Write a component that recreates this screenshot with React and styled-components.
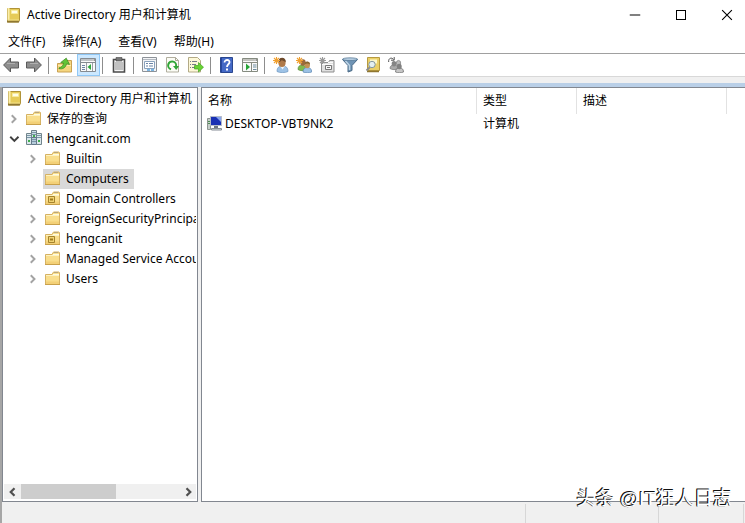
import React from 'react';
import styled, { createGlobalStyle } from 'styled-components';

const GlobalStyle = createGlobalStyle`
  * {
    box-sizing: border-box;
  }
  html, body, #root {
    height: 100%;
    margin: 0;
  }
  body, button {
    font-family: "Noto Sans", "Noto Sans CJK SC", sans-serif;
    font-size: 12px;
    color: #000;
  }
  button {
    background: none;
    border: none;
    padding: 0;
  }
  svg {
    display: block;
    flex: none;
  }
`;

function Icon({ size = 16, children }) {
  return (
    <svg width={size} height={size} viewBox="0 0 16 16" fill="none" aria-hidden="true">
      {children}
    </svg>
  );
}

const BookIcon = () => (
  <Icon>
    <path d="M1.500 1.500h12v12l-1 1.500h-11z" fill="#e6cb58" stroke="#b09338" />
    <path d="M2.500 1v13" stroke="#fbeeaa" strokeWidth="2" />
    <path d="M5.500 3.500h6v3h-6z" fill="#fffde6" stroke="#f7eba0" />
    <path d="M1 14.500h12" stroke="#8f7730" strokeWidth="2" />
    <path d="M2 13h11" stroke="#f3e08a" />
  </Icon>
);

const FolderIcon = ({ unit }) => (
  <Icon>
    <path d="M.5 4.500h6.500l1.500-2.500h5.500l.5 1v11.500H.5z" fill="#f9de8c" stroke="#d6b263" />
    <path d="M8 4.500h6" stroke="#fffbe0" />
    <path d="M9 2.500h4" stroke="#b9a67c" />
    <path d="M1 5.500h13" stroke="#fdf2c2" />
    <path d="M1 11.500h13v2.500H1z" fill="#f3d077" />
    <path d="M0 14.500h15" stroke="#c9a14b" />
    {unit && (
      <>
        <path d="M3.500 6.500h6v6h-6z" fill="#f0d273" stroke="#a5832c" />
        <path d="M5 8.500h3v2H5z" fill="#a07b1c" />
      </>
    )}
  </Icon>
);

const DomainIcon = () => (
  <Icon>
    <path d="M5.500.5h5v10h-5z" fill="#cfe0e8" stroke="#6d7f88" />
    <path d="M.5 3.500h5v11h-5zM10.500 3.500h5v11h-5z" fill="#dce8ec" stroke="#71848c" />
    <path d="M6 2.500h4M6 4.500h4M1 5.500h4M1 7.500h4M11 5.500h4M11 7.500h4" stroke="#7a96a8" />
    <path d="M5.500 7.500h5v7h-5z" fill="#b7cddb" stroke="#65798a" />
    <path d="M2 10h2v2H2zM12 10h2v2h-2zM7 5h2v2H7z" fill="#3fae4c" />
    <path d="M6 9.500h4M6 11.500h4" stroke="#7a96a8" />
  </Icon>
);

const ComputerIcon = () => (
  <Icon>
    <path d="M.5 3.500h3v11h-3z" fill="#c5cdc9" stroke="#8d9591" />
    <path d="M1 6.500h2M1 8.500h2" stroke="#4c8d52" />
    <path d="M3.500 1.500h11v9h-11z" fill="#1a30b4" stroke="#b4bbc8" />
    <path d="M9 2h5v5z" fill="#86a4ee" />
    <path d="M7 11h4v2H7z" fill="#6e7682" />
    <path d="M4.500 13.500h10v1.500h-10z" fill="#e4e7ea" stroke="#858c95" />
  </Icon>
);

const ArrowIcon = ({ flip }) => (
  <Icon>
    <path
      d="M.6 8L7.500 1v4h8v6h-8v4z"
      transform={flip ? 'rotate(180 8 8)' : undefined}
      fill="#8e8e8e"
      stroke="#5a5a5a"
    />
    <path d="M4 6.500h8" stroke="#b0b0b0" />
  </Icon>
);

const UpFolderIcon = () => (
  <Icon>
    <path d="M.5 6.500h7l1.500-3h5.500v11.500H.5z" fill="#f5d67f" stroke="#c9a152" />
    <path d="M1 8.500h13" stroke="#fbebae" />
    <path d="M3 12c2.500-1 3.500-3 3.500-5.500H3.500L8 1l4.500 5.500H9.500c0 4-2.500 6.300-6.500 6.300z" transform="rotate(12 8 7)" fill="#62c436" stroke="#3d8b22" strokeWidth=".7" />
  </Icon>
);

const TreePaneIcon = () => (
  <Icon>
    <path d="M.5 1.500h15v13H.5z" fill="#fafafa" stroke="#858b91" />
    <path d="M1 3h11M1 5.500h14" stroke="#858b91" />
    <path d="M12.500 3h1M14 3h1" stroke="#333" />
    <path d="M6.500 6v8M12.500 6v8" stroke="#9ba0a5" />
    <path d="M2 8.500h3M2 10.500h3M2 12.500h3" stroke="#6d83a4" />
    <path d="M11 7v6L7.500 10z" fill="#2fa83c" />
  </Icon>
);

const ActionPaneIcon = () => (
  <Icon>
    <path d="M.5 1.500h15v13H.5z" fill="#fafafa" stroke="#858b80" />
    <path d="M1 3h11M1 5.500h14" stroke="#8a8d82" />
    <path d="M12.500 3h1M14 3h1" stroke="#333" />
    <path d="M9.500 6v8" stroke="#858b80" />
    <path d="M11 8h3.500M11 10h3.500M11 12.500h3.500" stroke="#6b8b9c" />
    <path d="M4 6.500v7L8 10z" fill="#27a536" />
  </Icon>
);

const ClipboardIcon = () => (
  <Icon>
    <path d="M2.500 2.500h11V15h-11z" fill="#f4f4f4" stroke="#4b4b4b" strokeWidth="1.600" />
    <path d="M5 .5h6v3.500H5z" fill="#777" stroke="#444" strokeWidth=".6" />
    <path d="M4 6h8M4 8h8M4 10h8M4 12h8" stroke="#8f8f8f" />
  </Icon>
);

const PropertiesIcon = () => (
  <Icon>
    <path d="M.5.5h14v14H.5z" fill="#f3f4f6" stroke="#8d9298" />
    <path d="M1 2.500h13" stroke="#b4bac1" />
    <path d="M2.500 4.500h10v7h-10z" fill="#fff" stroke="#8aa2bd" />
    <path d="M4 6.500h2M7 6.500h4M4 9h2M7 9h4" stroke="#6b84a6" />
    <path d="M5 13h3M9 13h3" stroke="#56a0dc" strokeWidth="1.500" />
  </Icon>
);

const RefreshIcon = () => (
  <Icon>
    <path d="M1.500.5h9l3 3v11.500h-12z" fill="#fcfcf6" stroke="#b1ae9e" />
    <path d="M10.500.5v3h3" stroke="#aaa796" />
    <path d="M6 12.300A4 4 0 1 1 11 9.500" stroke="#31a637" strokeWidth="2" />
    <path d="M8 9h6l-2.800 4z" fill="#31a637" />
  </Icon>
);

const ExportIcon = () => (
  <Icon>
    <path d="M.5.5h9l3 3v11.500H.5z" fill="#fdf8d8" stroke="#b3aa86" />
    <path d="M2 4.500h1M4 4.500h5M2 7.500h1M4 7.500h4M2 10.500h1M4 10.500h4" stroke="#777c88" />
    <path d="M6.500 8.500h4V5.500l5 4.700-5 4.800v-3h-4z" fill="#69d334" stroke="#43a41f" strokeWidth=".7" />
  </Icon>
);

const HelpIcon = () => (
  <Icon>
    <path d="M1.500.5h12v15h-12z" fill="#4469c6" stroke="#2a478f" />
    <path d="M2.500 1v14" stroke="#2546a0" />
    <path d="M5.500 5.500c0-3.500 5.500-3.200 5 0C10.200 7.300 8 7.500 8 10" stroke="#fff" strokeWidth="1.800" />
    <path d="M7 11.500h2v2H7z" fill="#fff" />
  </Icon>
);

const Spark = ({ color = '#f0a030' }) => (
  <>
    <path d="M3.500 0v7M0 3.500h7M1 1l5 5M6 1L1 6" stroke={color} strokeWidth="1.100" />
    <circle cx="3.500" cy="3.500" r="1.600" fill={color} />
  </>
);

const UserIcon = () => (
  <Icon>
    <path d="M4 14.500c0-4 2-5.500 5.500-5.500s5.500 1.500 5.500 5.500c-2.500 1.500-8.500 1.500-11 0z" fill="#9dc2e6" stroke="#6d97c0" strokeWidth=".7" />
    <path d="M7 9l2.500 3.500L12 9z" fill="#eef5fb" />
    <ellipse cx="9" cy="5.500" rx="3.600" ry="4.500" fill="#b07a4a" />
    <path d="M5.800 4.500C5.500-.5 13-.5 12.800 5 11 4.500 9.500 3 8.500 3.300 8 4.500 7 5 5.800 4.500z" fill="#6d4a2c" />
    <Spark />
  </Icon>
);

const GroupIcon = () => (
  <Icon>
    <path d="M2 12.500c0-3 1.500-4.500 4-4.500s4 1.500 4 4.500c-2 1.500-6 1.500-8 0z" fill="#7fbb4e" stroke="#56893a" strokeWidth=".7" />
    <ellipse cx="7" cy="5.500" rx="2.700" ry="3.300" fill="#9c6a3c" />
    <path d="M7 15c0-3 1.500-4.500 4.300-4.500S15.700 12 15.700 15c-2 1-6.700 1-8.700 0z" fill="#9bc1e4" stroke="#5b87b3" strokeWidth=".7" />
    <ellipse cx="11.300" cy="8" rx="2.700" ry="3.300" fill="#c49255" />
    <path d="M8.500 7.500c-.3-4.300 5.800-4 5.500 0-1.500-1-3.500-1.500-5.500 0z" fill="#86652f" />
    <Spark />
  </Icon>
);

const NewUnitIcon = () => (
  <Icon>
    <path d="M2.500 5.500h7l1-2h4.500v11.500H2.500z" fill="#e0e0e0" stroke="#8e8e8e" />
    <path d="M9 5.500h5M3 7.500h11" stroke="#fafafa" />
    <path d="M6.500 8.500h6v4h-6z" fill="#f6f6f6" stroke="#777" />
    <path d="M8 10.500h3" stroke="#777" />
    <Spark color="#999" />
  </Icon>
);

const FilterIcon = () => (
  <Icon>
    <path d="M.5 2.500L6 8.500V15l4-1.500v-5l5.500-6z" fill="#6f94b5" stroke="#4b6a86" />
    <path d="M3.500 4L7.500 8.500V13" stroke="#bfd5e6" strokeWidth="1.500" />
    <ellipse cx="8" cy="2.200" rx="7.500" ry="1.400" fill="#b5cce0" stroke="#4f7391" strokeWidth=".7" />
  </Icon>
);

const FindIcon = () => (
  <Icon>
    <path d="M2.500.5h12v13h-12z" fill="#ead068" stroke="#b79a40" />
    <path d="M5 2.500h7v4H5z" fill="#fdf8cc" />
    <path d="M2 14.500h12" stroke="#8f762f" strokeWidth="1.500" />
    <path d="M5 10L1.500 13.500" stroke="#8d8d8d" strokeWidth="2" />
    <circle cx="7" cy="7.500" r="3.200" fill="#e4f0f2" stroke="#8498a0" />
  </Icon>
);

const AddToGroupIcon = () => (
  <Icon>
    <path d="M.7 5C0 1 4 0 5.500 2.500M3 3.200h3.200V0" stroke="#555" />
    <path d="M2 11.500C2 9 3.500 8 6 8s4 1 4 3.500c-2 1.500-6 1.500-8 0z" fill="#aaa" stroke="#777" strokeWidth=".7" />
    <ellipse cx="6" cy="6.800" rx="2.300" ry="2.700" fill="#858585" />
    <ellipse cx="10.500" cy="6" rx="2.200" ry="2.600" fill="#bbb" stroke="#666" strokeWidth=".6" />
    <path d="M7.500 15c0-3 1.500-4 4-4s4 1 4 4c-2 1-6 1-8 0z" fill="#c6c6c6" stroke="#666" strokeWidth=".7" />
    <ellipse cx="11.300" cy="9.500" rx="2.400" ry="2.800" fill="#808080" />
  </Icon>
);

const Chevron = ({ d, color, width = 2.6 }) => (
  <Icon size={12}>
    <path d={d} stroke={color} strokeWidth={width} />
  </Icon>
);

const menus = ['文件(F)', '操作(A)', '查看(V)', '帮助(H)'];

const toolGroups = [
  [
    { name: '后退', icon: <ArrowIcon /> },
    { name: '前进', icon: <ArrowIcon flip /> },
  ],
  [
    { name: '上一级', icon: <UpFolderIcon /> },
    { name: '显示控制台树', icon: <TreePaneIcon />, active: true },
  ],
  [{ name: '粘贴', icon: <ClipboardIcon /> }],
  [
    { name: '属性', icon: <PropertiesIcon /> },
    { name: '刷新', icon: <RefreshIcon /> },
    { name: '导出列表', icon: <ExportIcon /> },
  ],
  [
    { name: '帮助', icon: <HelpIcon /> },
    { name: '显示操作窗格', icon: <ActionPaneIcon /> },
  ],
  [
    { name: '新建用户', icon: <UserIcon /> },
    { name: '新建组', icon: <GroupIcon /> },
    { name: '新建组织单位', icon: <NewUnitIcon /> },
    { name: '筛选', icon: <FilterIcon /> },
    { name: '查找', icon: <FindIcon /> },
    { name: '添加到组', icon: <AddToGroupIcon /> },
  ],
];

const nodes = [
  { label: '保存的查询', level: 1, state: 'closed', icon: <FolderIcon /> },
  { label: 'hengcanit.com', level: 1, state: 'open', icon: <DomainIcon /> },
  { label: 'Builtin', level: 2, state: 'closed', icon: <FolderIcon /> },
  { label: 'Computers', level: 2, selected: true, icon: <FolderIcon /> },
  { label: 'Domain Controllers', level: 2, state: 'closed', icon: <FolderIcon unit /> },
  { label: 'ForeignSecurityPrincipals', level: 2, state: 'closed', icon: <FolderIcon /> },
  { label: 'hengcanit', level: 2, state: 'closed', icon: <FolderIcon unit /> },
  { label: 'Managed Service Accounts', level: 2, state: 'closed', icon: <FolderIcon /> },
  { label: 'Users', level: 2, state: 'closed', icon: <FolderIcon /> },
];

function TreeNode({ node }) {
  return (
    <TreeRow $level={node.level}>
      <Toggle aria-label={node.state ? `${node.label} 展开` : undefined} disabled={!node.state}>
        {node.state === 'closed' && <Chevron d="M5 3l5 5-5 5" color="#a3a3a3" />}
        {node.state === 'open' && <Chevron d="M3 5l5.500 5.500L14 5" color="#404040" />}
      </Toggle>
      <NodeLabel $selected={node.selected}>
        {node.icon}
        {node.label}
      </NodeLabel>
    </TreeRow>
  );
}

function App() {
  return (
    <Window>
      <GlobalStyle />
      <TitleBar>
        <BookIcon />
        <Title>Active Directory 用户和计算机</Title>
        <WindowButtons>
          <WindowButton aria-label="最小化">
            <Icon size={12}>
              <path d="M1 8h14" stroke="#000" strokeWidth="1.330" />
            </Icon>
          </WindowButton>
          <WindowButton aria-label="最大化">
            <MaximizeMark />
          </WindowButton>
          <WindowButton aria-label="关闭">
            <Icon size={12}>
              <path d="M1.500 1.500l13 13M14.500 1.500l-13 13" stroke="#000" strokeWidth="1.500" />
            </Icon>
          </WindowButton>
        </WindowButtons>
      </TitleBar>
      <MenuBar>
        {menus.map((menu) => (
          <MenuItem key={menu}>{menu}</MenuItem>
        ))}
      </MenuBar>
      <Toolbar>
        {toolGroups.map((group) => (
          <ToolGroup key={group[0].name}>
            {group.map((tool) => (
              <ToolButton key={tool.name} aria-label={tool.name} $active={tool.active}>
                {tool.icon}
              </ToolButton>
            ))}
          </ToolGroup>
        ))}
      </Toolbar>
      <Workspace>
        <TreePane>
          <Tree>
            <TreeRow $level={0}>
              <NodeLabel>
                <BookIcon />
                Active Directory 用户和计算机
              </NodeLabel>
            </TreeRow>
            {nodes.map((node) => (
              <TreeNode key={node.label} node={node} />
            ))}
          </Tree>
          <ScrollBar>
            <ScrollButton aria-label="向左滚动">
              <Chevron d="M10 3L5 8l5 5" color="#505050" width={3} />
            </ScrollButton>
            <ScrollTrack>
              <ScrollThumb />
            </ScrollTrack>
            <ScrollButton aria-label="向右滚动">
              <Chevron d="M6 3l5 5-5 5" color="#505050" width={3} />
            </ScrollButton>
          </ScrollBar>
        </TreePane>
        <ListPane>
          <ObjectTable>
            <colgroup>
              <Column $width={275} />
              <Column $width={100} />
              <Column $width={150} />
              <col />
            </colgroup>
            <thead>
              <tr>
                <HeadCell>名称</HeadCell>
                <HeadCell>类型</HeadCell>
                <HeadCell>描述</HeadCell>
                <td />
              </tr>
            </thead>
            <tbody>
              <tr>
                <NameCell>
                  <ObjectName>
                    <ComputerIcon />
                    DESKTOP-VBT9NK2
                  </ObjectName>
                </NameCell>
                <Cell>计算机</Cell>
                <Cell />
                <td />
              </tr>
            </tbody>
          </ObjectTable>
        </ListPane>
      </Workspace>
      <StatusBar>
        <StatusCell $grow />
        <StatusCell $width={133} />
        <StatusCell $width={85} />
      </StatusBar>
      <Watermark>头条 @IT狂人日志</Watermark>
    </Window>
  );
}

export default App;

const Window = styled.div`
  position: relative;
  display: flex;
  flex-direction: column;
  min-height: 100%;
  background: #fff;
  overflow: hidden;
`;

const TitleBar = styled.header`
  display: flex;
  align-items: center;
  height: 30px;
  padding-left: 6px;
`;

const Title = styled.h1`
  flex: 1;
  margin: 0 0 0 5px;
  padding-bottom: 2px;
  font-size: 12px;
  font-weight: 400;
  white-space: nowrap;
`;

const WindowButtons = styled.div`
  display: flex;
  gap: 10px;
`;

const WindowButton = styled.button`
  display: flex;
  align-items: center;
  justify-content: center;
  width: 36px;
  height: 28px;
`;

const MaximizeMark = styled.span`
  width: 10px;
  height: 10px;
  border: 1px solid #000;
`;

const MenuBar = styled.nav`
  display: flex;
  align-items: center;
  height: 24px;
  padding-left: 8px;
  gap: 17px;
  border-bottom: 1px solid #a0a0a0;
`;

const MenuItem = styled.button`
  padding-bottom: 2px;
  white-space: nowrap;
`;

const Toolbar = styled.div`
  display: flex;
  height: 23px;
  border-bottom: 1px solid #d8d8d8;
`;

const ToolGroup = styled.div`
  display: flex;
  & + &::before {
    content: '';
    width: 1px;
    margin: 3px 5px 2px 2px;
    background: #8d8d8d;
  }
`;

const ToolButton = styled.button`
  display: flex;
  align-items: center;
  width: 23px;
  height: 22px;
  padding-left: 2px;
  border: 1px solid ${(props) => (props.$active ? '#90c8f6' : 'transparent')};
  background: ${(props) => (props.$active ? '#cce8ff' : 'none')};
`;

const Workspace = styled.main`
  flex: 1;
  display: flex;
  gap: 3px;
  margin-top: 6px;
  padding-left: 2px;
  border-top: 4px solid #b9cfe7;
  background: #f0f0f0;
  box-shadow: inset 2px 0 #a6a6a6, 0 -6px #f0f0f0;
`;

const TreePane = styled.section`
  display: flex;
  flex-direction: column;
  flex: none;
  width: 196px;
  padding: 1px;
  border: 1px solid #828790;
  background: #fff;
`;

const Tree = styled.ul`
  flex: 1;
  margin: 0;
  padding: 0;
  list-style: none;
  overflow: hidden;
`;

const TreeRow = styled.li`
  display: flex;
  align-items: center;
  height: 20px;
  padding-left: ${(props) => (props.$level > 1 ? 19 : props.$level ? 0 : 1)}px;
`;

const Toggle = styled.button`
  display: flex;
  align-items: center;
  justify-content: center;
  flex: none;
  width: 20px;
  height: 20px;
`;

const NodeLabel = styled.button`
  display: flex;
  align-items: center;
  gap: 5px;
  height: 20px;
  padding: 0 5px 2px 2px;
  white-space: nowrap;
  background: ${(props) => (props.$selected ? '#d9d9d9' : 'none')};
`;

const ScrollBar = styled.div`
  display: flex;
  height: 15px;
  margin-bottom: 1px;
  background: #f0f0f0;
`;

const ScrollButton = styled.button`
  display: flex;
  align-items: center;
  justify-content: center;
  width: 17px;
`;

const ScrollTrack = styled.div`
  flex: 1;
  display: flex;
`;

const ScrollThumb = styled.div`
  width: 60%;
  background: #cdcdcd;
`;

const ListPane = styled.section`
  flex: 1;
  min-width: 0;
  border: 1px solid #828790;
  border-right: none;
  background: #fff;
`;

const ObjectTable = styled.table`
  width: 100%;
  table-layout: fixed;
  border-collapse: separate;
  border-spacing: 0;
`;

const Column = styled.col`
  width: ${(props) => props.$width}px;
`;

const HeadCell = styled.th`
  height: 26px;
  padding: 0 6px 2px;
  border-right: 1px solid #e2e2e2;
  font-weight: 400;
  text-align: left;
`;

const Cell = styled.td`
  height: 20px;
  padding: 0 6px 2px;
`;

const NameCell = styled(Cell)`
  padding: 0 5px 2px;
`;

const ObjectName = styled.span`
  display: flex;
  align-items: center;
  gap: 2px;
  white-space: nowrap;
`;

const StatusBar = styled.footer`
  display: flex;
  height: 21px;
  padding-right: 1px;
  padding-top: 2px;
  background: #f0f0f0;
  box-shadow: inset 2px 0 #a6a6a6;
`;

const StatusCell = styled.div`
  flex: ${(props) => (props.$grow ? '1' : 'none')};
  width: ${(props) => (props.$width ? `${props.$width}px` : 'auto')};
  border-right: 1px solid #d7d7d7;
`;

const Watermark = styled.div`
  position: absolute;
  right: 13px;
  bottom: 10px;
  font-family: "Liberation Sans", "Noto Sans CJK SC", sans-serif;
  font-size: 19px;
  line-height: 28px;
  color: #fff;
  text-shadow: -1px -1px #111, -1px 0 #333;
  white-space: nowrap;
`;
